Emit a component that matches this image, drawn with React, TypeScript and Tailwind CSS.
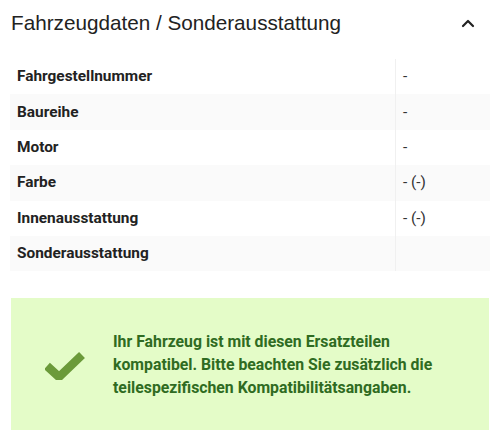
import React from "react";

const rows: { label: string; value: string }[] = [
  { label: "Fahrgestellnummer", value: "-" },
  { label: "Baureihe", value: "-" },
  { label: "Motor", value: "-" },
  { label: "Farbe", value: "- (-)" },
  { label: "Innenausstattung", value: "- (-)" },
  { label: "Sonderausstattung", value: "" },
];

export default function App() {
  return (
    <div className="w-[500px] h-[439px] bg-white overflow-hidden">
      <div className="flex items-center justify-between pl-[11px] pr-[25px] h-[45px]">
        <h2 className="text-[20.7px] text-[#222] font-normal" style={{ fontFamily: '"Liberation Sans", Arial, sans-serif' }}>
          Fahrzeugdaten / Sonderausstattung
        </h2>
        <svg width="14" height="10" viewBox="0 0 14 10" fill="none" className="mt-[1px]">
          <path d="M2 8 L7 3 L12 8" stroke="#222" strokeWidth="2.2" strokeLinecap="round" strokeLinejoin="round" />
        </svg>
      </div>
      <div className="mx-[10px] mt-[14px]" style={{ fontFamily: "Roboto, sans-serif" }}>
        {rows.map((r, i) => (
          <div key={r.label} className={`flex h-[35.4px] ${i % 2 === 1 ? "bg-[#fafafa]" : "bg-white"}`}>
            <div className="w-[386px] flex items-center pl-[7px] text-[15.4px] font-bold text-[#222] border-r border-[#f0f0f0]">
              {r.label}
            </div>
            <div className="flex-1 flex items-center pl-[7px] text-[15.4px] text-[#333]">{r.value}</div>
          </div>
        ))}
      </div>
      <div className="mx-[11px] mt-[27px] h-[132px] bg-[#e4fcc8] flex items-center" style={{ fontFamily: "Roboto, sans-serif" }}>
        <div className="w-[102px] flex justify-center pl-[20px] pr-[14px] shrink-0">
          <svg width="40" height="32" viewBox="0 0 40 32">
            <path d="M2 18 L14 29 L37 7" stroke="#6b9a3a" strokeWidth="8.5" fill="none" strokeLinejoin="miter" />
          </svg>
        </div>
        <p className="w-[325px] text-[15.8px] leading-[23px] font-bold text-[#2f6b22]">
          Ihr Fahrzeug ist mit diesen Ersatzteilen kompatibel. Bitte beachten Sie zusätzlich die teilespezifischen Kompatibilitätsangaben.
        </p>
      </div>
    </div>
  );
}
